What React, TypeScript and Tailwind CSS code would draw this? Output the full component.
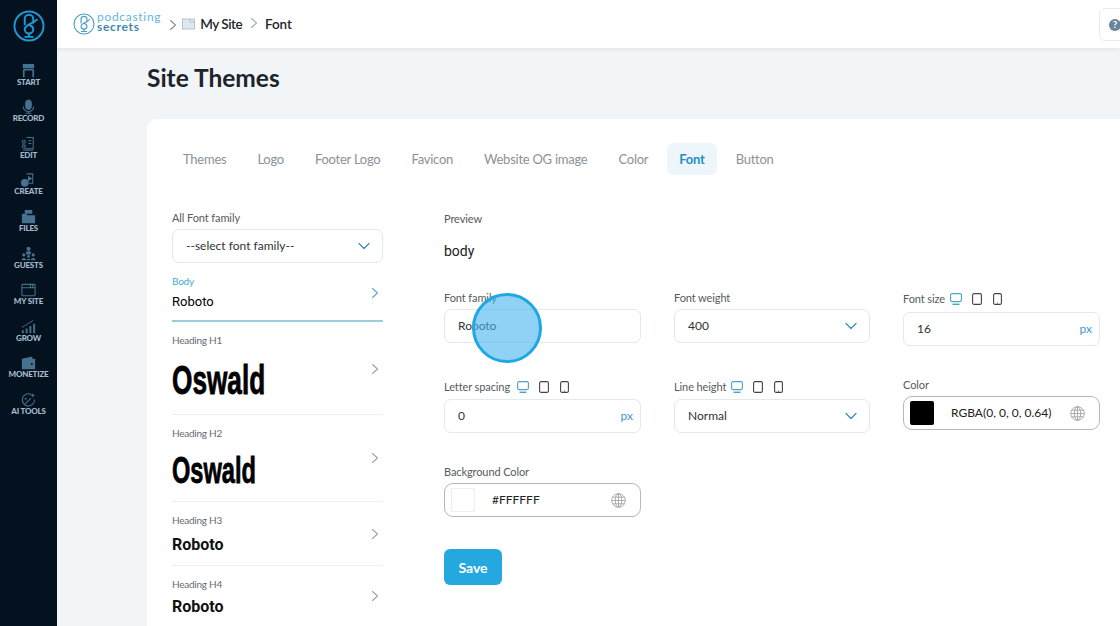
import React from "react";

const F = "font-['Lato','Noto_Sans',sans-serif]";
const Chevron = ({ c = "#3a8fb5", s = 14 }: { c?: string; s?: number }) => (
  <svg width={s} height={s} viewBox="0 0 14 14" fill="none" stroke={c} strokeWidth="1.3" strokeLinecap="round" strokeLinejoin="round"><path d="M2 4.5 7 9.5 12 4.5" /></svg>
);
const Right = ({ c = "#9aa3ab" }: { c?: string }) => (
  <svg width="8" height="12" viewBox="0 0 8 12" fill="none" stroke={c} strokeWidth="1.1" strokeLinecap="round" strokeLinejoin="round"><path d="M1.5 1.5 6.5 6 1.5 10.5" /></svg>
);
const Devices = () => (
  <span className="flex items-center gap-[10px]">
    <svg width="12" height="12" viewBox="0 0 12 12" fill="none" stroke="#4ba3c7" strokeWidth="1.1"><rect x="0.6" y="0.6" width="10.8" height="8" rx="1.5" /><path d="M2.5 11.3h7" strokeWidth="1.4" /></svg>
    <svg width="10" height="12" viewBox="0 0 10 12" fill="none" stroke="#444" strokeWidth="1.1"><rect x="0.6" y="0.6" width="8.8" height="10.8" rx="1.5" /></svg>
    <svg className="ml-[1px]" width="9" height="12" viewBox="0 0 9 12" fill="none" stroke="#444" strokeWidth="1.1"><rect x="0.6" y="0.6" width="7.8" height="10.8" rx="1.5" /><path d="M4 10h1" /></svg>
  </span>
);
const Globe = () => (
  <svg width="15" height="15" viewBox="0 0 15 15" fill="none" stroke="#9a9a9a" strokeWidth="0.8"><circle cx="7.5" cy="7.5" r="6.8" /><ellipse cx="7.5" cy="7.5" rx="3.2" ry="6.8" /><path d="M7.5.7v13.6M.7 7.5h13.6M1.6 4.2h11.8M1.6 10.8h11.8" /></svg>
);
const Label = ({ children }: { children: React.ReactNode }) => <span className="block text-[11px] leading-[14px] tracking-[-0.1px] text-[#555b61]">{children}</span>;
const box = "flex items-center h-[34px] rounded-[7px] border border-[#e3e8ec] bg-white text-[12px] text-[#333]";
const Select = ({ v }: { v: string }) => (
  <div className={`${box} justify-between pl-[13px] pr-[11px]`}><span>{v}</span><Chevron /></div>
);
const Px = ({ v }: { v: string }) => (
  <div className={`${box} justify-between pl-[13px] pr-[7px]`}><span>{v}</span><span className="text-[#3a9cc4]">px</span></div>
);
const ColorBox = ({ v, sw }: { v: string; sw: string }) => (
  <div className="flex items-center h-[34px] rounded-[9px] border border-[#b5b8ba] bg-white pl-[6px] pr-[14px] text-[12px] text-[#222]">
    <span className={`w-[24px] h-[24px] rounded-[2px] ${sw}`} />
    <span className="ml-[17px] flex-1">{v}</span>
    <Globe />
  </div>
);

const navIcons: Record<string, React.ReactNode> = {
  START: <g><rect x="3" y="1" width="12" height="4.5" fill="currentColor" /><path d="M4 7h10M4 7v8M14 7v8" stroke="currentColor" strokeWidth="1.8" fill="none" /></g>,
  RECORD: <g fill="none" stroke="currentColor"><rect x="6" y="1" width="6" height="10" rx="3" fill="currentColor" /><path d="M3.5 8a5.5 5.5 0 0 0 11 0M9 13.5V15M6 15h6" strokeWidth="1.1" /></g>,
  EDIT: <g fill="none" stroke="currentColor" strokeWidth="1.1"><path d="M7 1.5h7v12H5M9 5h3M9 8h3" /><circle cx="4" cy="6" r="1.6" /><circle cx="4" cy="11" r="1.6" /><path d="M3 15h11" /></g>,
  CREATE: <g fill="none" stroke="currentColor" strokeWidth="1.1"><path d="M7 2h6.5v10H9" /><path d="M9 5l3 2-3 2z" fill="currentColor" /><circle cx="5" cy="11.5" r="3.6" fill="currentColor" /></g>,
  FILES: <g fill="currentColor"><rect x="5" y="1" width="8" height="4" /><path d="M2 5h5l1 1.5h8V15H2z" /></g>,
  GUESTS: <g fill="currentColor"><circle cx="9" cy="3" r="2.2" /><rect x="6.5" y="5.5" width="5" height="3.5" rx="1" /><circle cx="4" cy="9.5" r="1.7" /><circle cx="14" cy="9.5" r="1.7" /><circle cx="9" cy="11" r="1.5" /><path d="M1.5 15c0-3 5-3 5 0zM11.5 15c0-3 5-3 5 0zM7 15c0-2 4-2 4 0z" /></g>,
  "MY SITE": <g fill="none" stroke="currentColor" strokeWidth="1.1"><rect x="2" y="2.5" width="14" height="12" rx="1" /><path d="M2 6h14M11 3v3M13.5 3v3" /></g>,
  GROW: <g fill="currentColor"><rect x="2" y="12" width="2" height="3" /><rect x="6" y="10" width="2" height="5" /><rect x="10" y="7.5" width="2" height="7.5" /><rect x="14" y="5" width="2" height="10" /><path d="M2 9 14 1.5" stroke="currentColor" fill="none" strokeWidth="1" /></g>,
  MONETIZE: <g fill="currentColor"><path d="M2 4 13 1.5V4h3v11H2z" /><circle cx="12.5" cy="9.5" r="1.1" fill="#04111e" /></g>,
  "AI TOOLS": <g fill="none" stroke="currentColor" strokeWidth="1.1"><path d="M12 2.6A6.5 6.5 0 1 0 15.4 8" /><path d="M5.5 12.5 11.5 6.5" /><path d="M13.5 1l.7 1.8L16 3.5l-1.8.7-.7 1.8-.7-1.8-1.8-.7 1.8-.7z" fill="currentColor" stroke="none" /><path d="M6 5.5l.5 1.2 1.2.5-1.2.5L6 8.9l-.5-1.2-1.2-.5 1.2-.5z" fill="currentColor" stroke="none" /></g>,
};
const nav = ["START", "RECORD", "EDIT", "CREATE", "FILES", "GUESTS", "MY SITE", "GROW", "MONETIZE", "AI TOOLS"];
const Mic = ({ c, w }: { c: string; w: number }) => (
  <g fill="none" stroke={c} strokeWidth={w} strokeLinecap="round"><circle cx="15" cy="15" r="13.6" /><path d="M11 13.5V8.5a4 4 0 0 1 8 0V12" /><path d="M22.5 9C18.5 13 11 14 11 18a4 4 0 0 0 8 0c0-1.5-1-3-3-3.5" /><path d="M15 22v3M11.5 25.2h7" /></g>
);

const Item = ({ label, active, h, rightTop, children }: { label: string; active?: boolean; h: string; rightTop: string; children: React.ReactNode }) => (
  <div className={`relative ${h} ${active ? "border-b-2 border-[#9ccbdb]" : "border-b border-[#eceef0]"}`}>
    <div className={`pt-[11px] text-[10px] leading-[14px] tracking-[-0.25px] ${active ? "text-[#46a9d0]" : "text-[#666c72]"}`}>{label}</div>
    {children}
    <span className={`absolute right-[4px] ${rightTop}`}><Right c={active ? "#5aa9c9" : "#9aa3ab"} /></span>
  </div>
);

const Oswald = ({ cls }: { cls: string }) => (
  <div className={`font-['Liberation_Sans',sans-serif] font-bold text-black origin-left scale-x-[0.655] [-webkit-text-stroke:0.8px_black] ${cls}`}>Oswald</div>
);

const tabs = ["Themes", "Logo", "Footer Logo", "Favicon", "Website OG image", "Color", "Font", "Button"];

export default function App() {
  return (
    <div className={`${F} relative flex h-[626px] w-[1120px] overflow-hidden bg-[#f1f5f8]`}>
      <aside className="w-[57px] shrink-0 bg-[#04111e] flex flex-col items-center">
        <svg className="mt-[10px] mb-[8px]" width="32" height="32" viewBox="0 0 30 30"><Mic c="#1f9ad6" w={1.8} /></svg>
        {nav.map((n) => (
          <div key={n} className="h-[36.6px] w-full flex flex-col items-center justify-end text-[#47728f]">
            <svg className="mb-[-3px]" width="17" height="17" viewBox="0 0 18 18">{navIcons[n]}</svg>
            <span className="relative text-[8px] leading-[10px] font-black text-[#a3bbce] whitespace-nowrap tracking-[-0.2px]">{n}</span>
          </div>
        ))}
      </aside>
      <div className="flex-1 min-w-0 flex flex-col">
        <header className="h-[48px] shrink-0 bg-white shadow-[0_1px_4px_rgba(0,0,0,0.08)] flex items-center pl-[16px] relative">
          <svg width="22" height="22" viewBox="0 0 30 30"><Mic c="#4aa0c8" w={1.6} /></svg>
          <div className="ml-[2px] flex flex-col text-[12px] mt-[-4px]">
            <span className="leading-[10px] text-[#5fb6dc] tracking-[0.7px]">podcasting</span>
            <span className="leading-[10px] text-[#3f86ab] tracking-[0.7px] font-bold">secrets</span>
          </div>
          <span className="ml-[8px] mt-[2px]"><Right c="#8a8f94" /></span>
          <svg className="ml-[5px]" width="13" height="12" viewBox="0 0 13 12" fill="#dfe8ee" stroke="#a9b8c2" strokeWidth="0.8"><rect x="0.5" y="1" width="12" height="10" /><path d="M8 1v3h4.5" fill="none" /></svg>
          <span className="ml-[5px] text-[13.5px] font-semibold tracking-[-0.5px] text-[#20262b]">My Site</span>
          <span className="ml-[8px] mt-[-2px]"><Right c="#a5aaae" /></span>
          <span className="ml-[7px] text-[13.5px] font-semibold tracking-[-0.1px] text-[#20262b]">Font</span>
          <div className="absolute left-[1042px] top-[8px] w-[40px] h-[33px] rounded-[6px] border border-[#e8ecef] bg-white flex items-center pl-[9px]">
            <span className="flex w-[12px] h-[12px] rounded-full bg-[#68859c] text-white text-[10px] font-bold items-center justify-center">?</span>
          </div>
        </header>
        <main className="flex-1 min-h-0 pl-[90px]">
          <h1 className="mt-[13px] text-[24.5px] leading-[34px] font-bold text-[#1c2329]">Site Themes</h1>
          <section className="mt-[24px] w-[1000px] h-[600px] bg-white rounded-tl-[10px] pl-[25px] pt-[24px]">
            <nav className="flex gap-[7px] ml-[-1px]">
              {tabs.map((t) => (
                <span key={t} className={`h-[32px] px-[12px] pt-[1px] flex items-center rounded-[6px] text-[13px] tracking-[-0.25px] ${t === "Font" ? "bg-[#eef6fb] text-[#1f8fc0] font-bold px-[11.5px]" : "text-[#8b9299]"}`}>{t}</span>
              ))}
            </nav>
            <div className="flex mt-[36px]">
              <div className="w-[211px] shrink-0">
                <Label>All Font family</Label>
                <div className="mt-[4px]"><Select v="--select font family--" /></div>
                <Item active label="Body" h="h-[59px]" rightTop="top-[24px]">
                  <div className="font-['Roboto',sans-serif] text-[13px] leading-[20px] mt-[4px] text-black">Roboto</div>
                </Item>
                <Item label="Heading H1" h="h-[93px]" rightTop="top-[41px]"><Oswald cls="text-[40px] leading-[46px] mt-[10px]" /></Item>
                <Item label="Heading H2" h="h-[87px]" rightTop="top-[37px]"><Oswald cls="text-[36px] leading-[40px] mt-[11px]" /></Item>
                <Item label="Heading H3" h="h-[64px]" rightTop="top-[26px]">
                  <div className="font-['Roboto',sans-serif] font-bold text-[16px] leading-[20px] mt-[8px] text-[#111]">Roboto</div>
                </Item>
                <Item label="Heading H4" h="h-[64px]" rightTop="top-[24px]">
                  <div className="font-['Roboto',sans-serif] font-bold text-[16px] leading-[20px] mt-[6px] text-[#111]">Roboto</div>
                </Item>
              </div>
              <div className="ml-[61px] w-[656px]">
                <div className="mt-[1px]"><Label>Preview</Label></div>
                <div className="mt-[15px] text-[14px] leading-[20px] text-[#222] font-['Roboto',sans-serif]">body</div>
                <div className="mt-[30px] grid grid-cols-[197px_196px_197px] gap-x-[33px]">
                  <div className="h-[89px] flex flex-col gap-[4px]"><Label>Font family</Label><div className={`${box} pl-[13px]`}>Roboto</div></div>
                  <div className="h-[89px] flex flex-col gap-[4px]"><Label>Font weight</Label><Select v="400" /></div>
                  <div className="h-[89px] flex flex-col gap-[6px] pt-[1px]"><span className="flex items-center gap-[5px] h-[14px]"><Label>Font size</Label><Devices /></span><Px v="16" /></div>
                  <div className="h-[85px] flex flex-col gap-[5px]"><span className="flex items-center gap-[7px] h-[14px]"><Label>Letter spacing</Label><Devices /></span><Px v="0" /></div>
                  <div className="h-[85px] flex flex-col gap-[5px]"><span className="flex items-center gap-[5px] h-[14px]"><Label>Line height</Label><Devices /></span><Select v="Normal" /></div>
                  <div className="h-[85px] flex flex-col gap-[4px] mt-[-2px]"><Label>Color</Label><ColorBox v="RGBA(0, 0, 0, 0.64)" sw="bg-black" /></div>
                  <div className="flex flex-col gap-[4px]"><Label>Background Color</Label><ColorBox v="#FFFFFF" sw="bg-white border border-[#eee]" /></div>
                </div>
                <button className="mt-[32px] w-[58px] h-[36px] rounded-[6px] bg-[#25a8df] text-white text-[14px] font-bold">Save</button>
              </div>
            </div>
          </section>
        </main>
      </div>
      <div className="absolute left-[472px] top-[293px] w-[70px] h-[70px] rounded-full bg-[#45b4f0]/60 border-[3px] border-[#1ea7e1]" />
    </div>
  );
}
